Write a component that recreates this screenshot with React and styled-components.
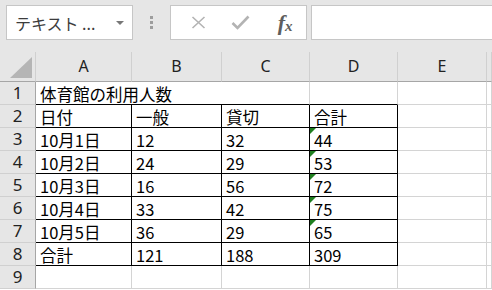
import React from 'react';
import styled, { createGlobalStyle } from 'styled-components';

const GlobalStyle = createGlobalStyle`
  html, body {
    margin: 0;
    padding: 0;
    background: #ffffff;
    overflow: hidden;
  }
`;

const columns = ['A', 'B', 'C', 'D', 'E', ''];

const rows = [
  ['日付', '一般', '貸切', '合計'],
  ['10月1日', '12', '32', '44'],
  ['10月2日', '24', '29', '53'],
  ['10月3日', '16', '56', '72'],
  ['10月4日', '33', '42', '75'],
  ['10月5日', '36', '29', '65'],
  ['合計', '121', '188', '309'],
];

// rows whose D cell carries the green "formula" marker
const flagged = [1, 2, 3, 4, 5];

function App() {
  return (
    <Page>
      <GlobalStyle />
      <Toolbar>
        <NameBox>
          <NameText>テキスト ...</NameText>
          <DropArrow />
        </NameBox>
        <Grip>
          <Dot />
          <Dot />
          <Dot />
        </Grip>
        <ButtonBox>
          <IconSlot>
            <svg width="17" height="13" viewBox="0 0 17 13">
              <path d="M2.5 1 L14.5 12 M14.5 1 L2.5 12" stroke="#b3b3b3" strokeWidth="1.6" fill="none" />
            </svg>
          </IconSlot>
          <IconSlot>
            <svg width="19" height="15" viewBox="0 0 19 15">
              <path d="M1.5 8 L6.5 13 L17.5 1.5" stroke="#b3b3b3" strokeWidth="2.6" fill="none" />
            </svg>
          </IconSlot>
          <Fx>
            <FxF>f</FxF>
            <FxX>x</FxX>
          </Fx>
        </ButtonBox>
        <FormulaInput />
      </Toolbar>

      <Sheet>
        <Corner>
          <CornerTri />
        </Corner>
        {columns.map((c, i) => (
          <ColHead key={i}>{c}</ColHead>
        ))}

        <RowHead>1</RowHead>
        <Cell $span={3} $bottom>
          体育館の利用人数
        </Cell>
        <Cell $bottom />
        <Cell />
        <Cell />

        {rows.map((r, ri) => (
          <React.Fragment key={ri}>
            <RowHead>{ri + 2}</RowHead>
            {r.map((v, ci) => (
              <Cell key={ci} $bottom $right>
                {ci === 3 && flagged.includes(ri) && <Marker />}
                {v}
              </Cell>
            ))}
            <Cell />
            <Cell />
          </React.Fragment>
        ))}

        <RowHead>9</RowHead>
        <Cell />
        <Cell />
        <Cell />
        <Cell />
        <Cell />
        <Cell />
      </Sheet>
    </Page>
  );
}

export default App;

const Page = styled.div`
  width: 492px;
  height: 290px;
  display: flex;
  flex-direction: column;
  background: #ffffff;
`;

const Toolbar = styled.div`
  height: 52px;
  box-sizing: border-box;
  padding: 5px 0 12px 6px;
  background: #e6e6e6;
  display: flex;
  align-items: stretch;
`;

const NameBox = styled.div`
  width: 127px;
  box-sizing: border-box;
  background: #ffffff;
  border: 1px solid #c6c6c6;
  display: flex;
  align-items: center;
  padding: 0 8px 0 8px;
`;

const NameText = styled.span`
  flex: 1;
  font-family: 'Noto Sans CJK JP', sans-serif;
  font-size: 16px;
  color: #3c3c3c;
  white-space: nowrap;
`;

const DropArrow = styled.span`
  width: 0;
  height: 0;
  border-left: 4px solid transparent;
  border-right: 4px solid transparent;
  border-top: 4px solid #777777;
`;

const Grip = styled.div`
  width: 37px;
  display: flex;
  flex-direction: column;
  align-items: center;
  justify-content: center;
  gap: 2px;
`;

const Dot = styled.span`
  width: 3px;
  height: 3px;
  background: #9d9d9d;
`;

const ButtonBox = styled.div`
  width: 137px;
  box-sizing: border-box;
  background: #ffffff;
  border: 1px solid #c6c6c6;
  display: flex;
  align-items: center;
  padding-left: 7px;
`;

const IconSlot = styled.span`
  width: 45px;
  display: flex;
  justify-content: center;
  align-items: center;
`;

const Fx = styled.span`
  width: 45px;
  display: flex;
  justify-content: center;
  align-items: baseline;
  font-family: 'Liberation Serif', serif;
  font-style: italic;
  font-weight: bold;
  color: #5e5e5e;
  padding-left: 3px;
`;

const FxF = styled.span`
  font-size: 22px;
  line-height: 1;
`;

const FxX = styled.span`
  font-size: 15px;
  line-height: 1;
  position: relative;
  top: 1px;
`;

const FormulaInput = styled.div`
  flex: 1;
  margin-left: 4px;
  background: #ffffff;
  border: 1px solid #c6c6c6;
  border-right: none;
`;

const Sheet = styled.div`
  flex: 1;
  display: grid;
  grid-template-columns: 36px 96px 90px 88px 88px 89px 1fr;
  grid-template-rows: 30px repeat(9, 23px);
`;

const Corner = styled.div`
  background: #e6e6e6;
  border-right: 1px solid #d0d0d0;
  border-bottom: 1px solid #a6a6a6;
  position: relative;
`;

const CornerTri = styled.span`
  position: absolute;
  right: 3px;
  bottom: 3px;
  width: 0;
  height: 0;
  border-left: 22px solid transparent;
  border-bottom: 21px solid #b5b5b5;
`;

const ColHead = styled.div`
  background: #e6e6e6;
  border-right: 1px solid #d0d0d0;
  border-bottom: 1px solid #a6a6a6;
  display: flex;
  align-items: center;
  justify-content: center;
  font-family: 'Noto Sans', sans-serif;
  font-size: 16px;
  color: #222222;
  padding-bottom: 1px;
`;

const RowHead = styled.div`
  background: #e6e6e6;
  border-right: 1px solid #a6a6a6;
  border-bottom: 1px solid #d0d0d0;
  display: flex;
  align-items: center;
  justify-content: center;
  font-family: 'Noto Sans', sans-serif;
  font-size: 17px;
  color: #222222;
  padding-bottom: 2px;
`;

const Cell = styled.div`
  position: relative;
  grid-column: span ${(p) => p.$span || 1};
  border-right: 1px solid ${(p) => (p.$right ? '#000000' : '#d4d4d4')};
  border-bottom: 1px solid ${(p) => (p.$bottom ? '#000000' : '#d4d4d4')};
  display: flex;
  align-items: center;
  padding: 1px 0 0 4px;
  font-family: 'Noto Sans CJK JP', sans-serif;
  font-size: 16.5px;
  color: #000000;
  white-space: nowrap;
  overflow: hidden;
`;

const Marker = styled.span`
  position: absolute;
  top: 0;
  left: 0;
  width: 0;
  height: 0;
  border-top: 6px solid #1f7f1f;
  border-right: 6px solid transparent;
`;
